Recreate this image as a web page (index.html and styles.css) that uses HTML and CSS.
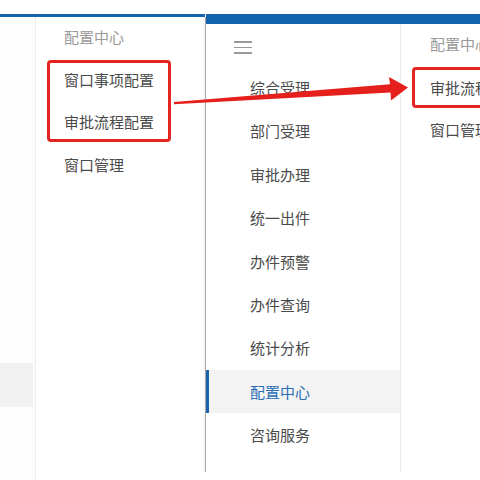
FILE: index.html
```html
<!DOCTYPE html>
<html lang="zh">
<head>
<meta charset="utf-8">
<link rel="stylesheet" href="styles.css">
</head>
<body>
<div class="stage">
  <div class="left-group">
    <div class="strip"><div class="strip-hl"></div></div>
    <div class="popup">
      <div class="head">配置中心</div>
      <div class="mark mark-left">
        <div class="item">窗口事项配置</div>
        <div class="item">审批流程配置</div>
      </div>
      <div class="item after">窗口管理</div>
    </div>
  </div>
  <div class="divider"></div>
  <div class="main">
    <div class="nav">
      <div class="burger"><span></span><span></span><span></span></div>
      <div class="nav-item">综合受理</div>
      <div class="nav-item">部门受理</div>
      <div class="nav-item">审批办理</div>
      <div class="nav-item">统一出件</div>
      <div class="nav-item">办件预警</div>
      <div class="nav-item">办件查询</div>
      <div class="nav-item">统计分析</div>
      <div class="nav-item active">配置中心</div>
      <div class="nav-item">咨询服务</div>
    </div>
    <div class="sub">
      <div class="head">配置中心</div>
      <div class="mark mark-right">
        <div class="item">审批流程配置</div>
      </div>
      <div class="item after2">窗口管理</div>
    </div>
  </div>
</div>
<svg class="arrow" width="480" height="480" viewBox="0 0 480 480">
  <polygon points="174,102 390,84.3 389,77 408,87.5 391,100.5 390.5,92.5 174,104.2" fill="#e5201c"/>
</svg>
</body>
</html>
```
FILE: styles.css
```css
* { box-sizing: border-box; }
html, body { margin: 0; padding: 0; background: #fff; }
body {
  width: 480px;
  height: 480px;
  overflow: hidden;
  position: relative;
  padding-top: 14px;
  font-family: "Noto Sans CJK SC", "Noto Sans", sans-serif;
  font-size: 15px;
  color: #4a4a4a;
}
.stage {
  display: flex;
  align-items: flex-start;
}
.left-group {
  width: 205px;
  height: 466px;
  display: flex;
  border-top: 3px solid #1463ae;
}
.strip {
  width: 36px;
  border-right: 1px solid #ececec;
  background: #fdfdfd;
  padding-top: 346px;
}
.strip-hl {
  width: 33px;
  height: 44px;
  background: #f1f1f1;
}
.popup {
  flex: 1;
  padding-left: 28px;
}
.head {
  height: 40px;
  line-height: 40px;
  color: #999;
  white-space: nowrap;
}
.item {
  height: 34px;
  line-height: 34px;
  white-space: nowrap;
}
.mark {
  border: 3px solid #e32420;
  border-radius: 4px;
  margin-top: 3px;
}
.mark-left {
  margin-left: -17px;
  width: 124px;
  padding-left: 14px;
  display: flex;
  flex-direction: column;
  gap: 8px;
}
.item.after { margin-top: 6px; }
.divider {
  width: 1px;
  height: 455px;
  margin-top: 3px;
  background: #a8a8a8;
  box-shadow: -1px 0 2px rgba(0,0,0,0.08);
}
.main {
  flex: 1;
  height: 458px;
  border-top: 10px solid #1463ae;
  display: flex;
  overflow: hidden;
}
.nav {
  width: 195px;
  border-right: 1px solid #ececec;
}
.burger {
  height: 42px;
  padding: 17px 0 0 28px;
  display: flex;
  flex-direction: column;
  gap: 4px;
}
.burger span {
  display: block;
  width: 18px;
  height: 1.5px;
  background: #9a9a9a;
}
.nav-item {
  height: 43.4px;
  line-height: 43.4px;
  padding-left: 44px;
  white-space: nowrap;
}
.nav-item.active {
  background: #f3f3f3;
  color: #2a6fb4;
  border-left: 3px solid #1a64ae;
  padding-left: 41px;
}
.sub {
  flex: 1;
  min-width: 0;
  padding-left: 29px;
  overflow: hidden;
}
.mark-right {
  margin-left: -18px;
  width: 124px;
  padding-left: 15px;
}
.mark-right .item { height: 35px; line-height: 35px; }
.item.after2 { margin-top: 5px; }
.arrow {
  position: absolute;
  left: 0;
  top: 0;
  pointer-events: none;
}
```
